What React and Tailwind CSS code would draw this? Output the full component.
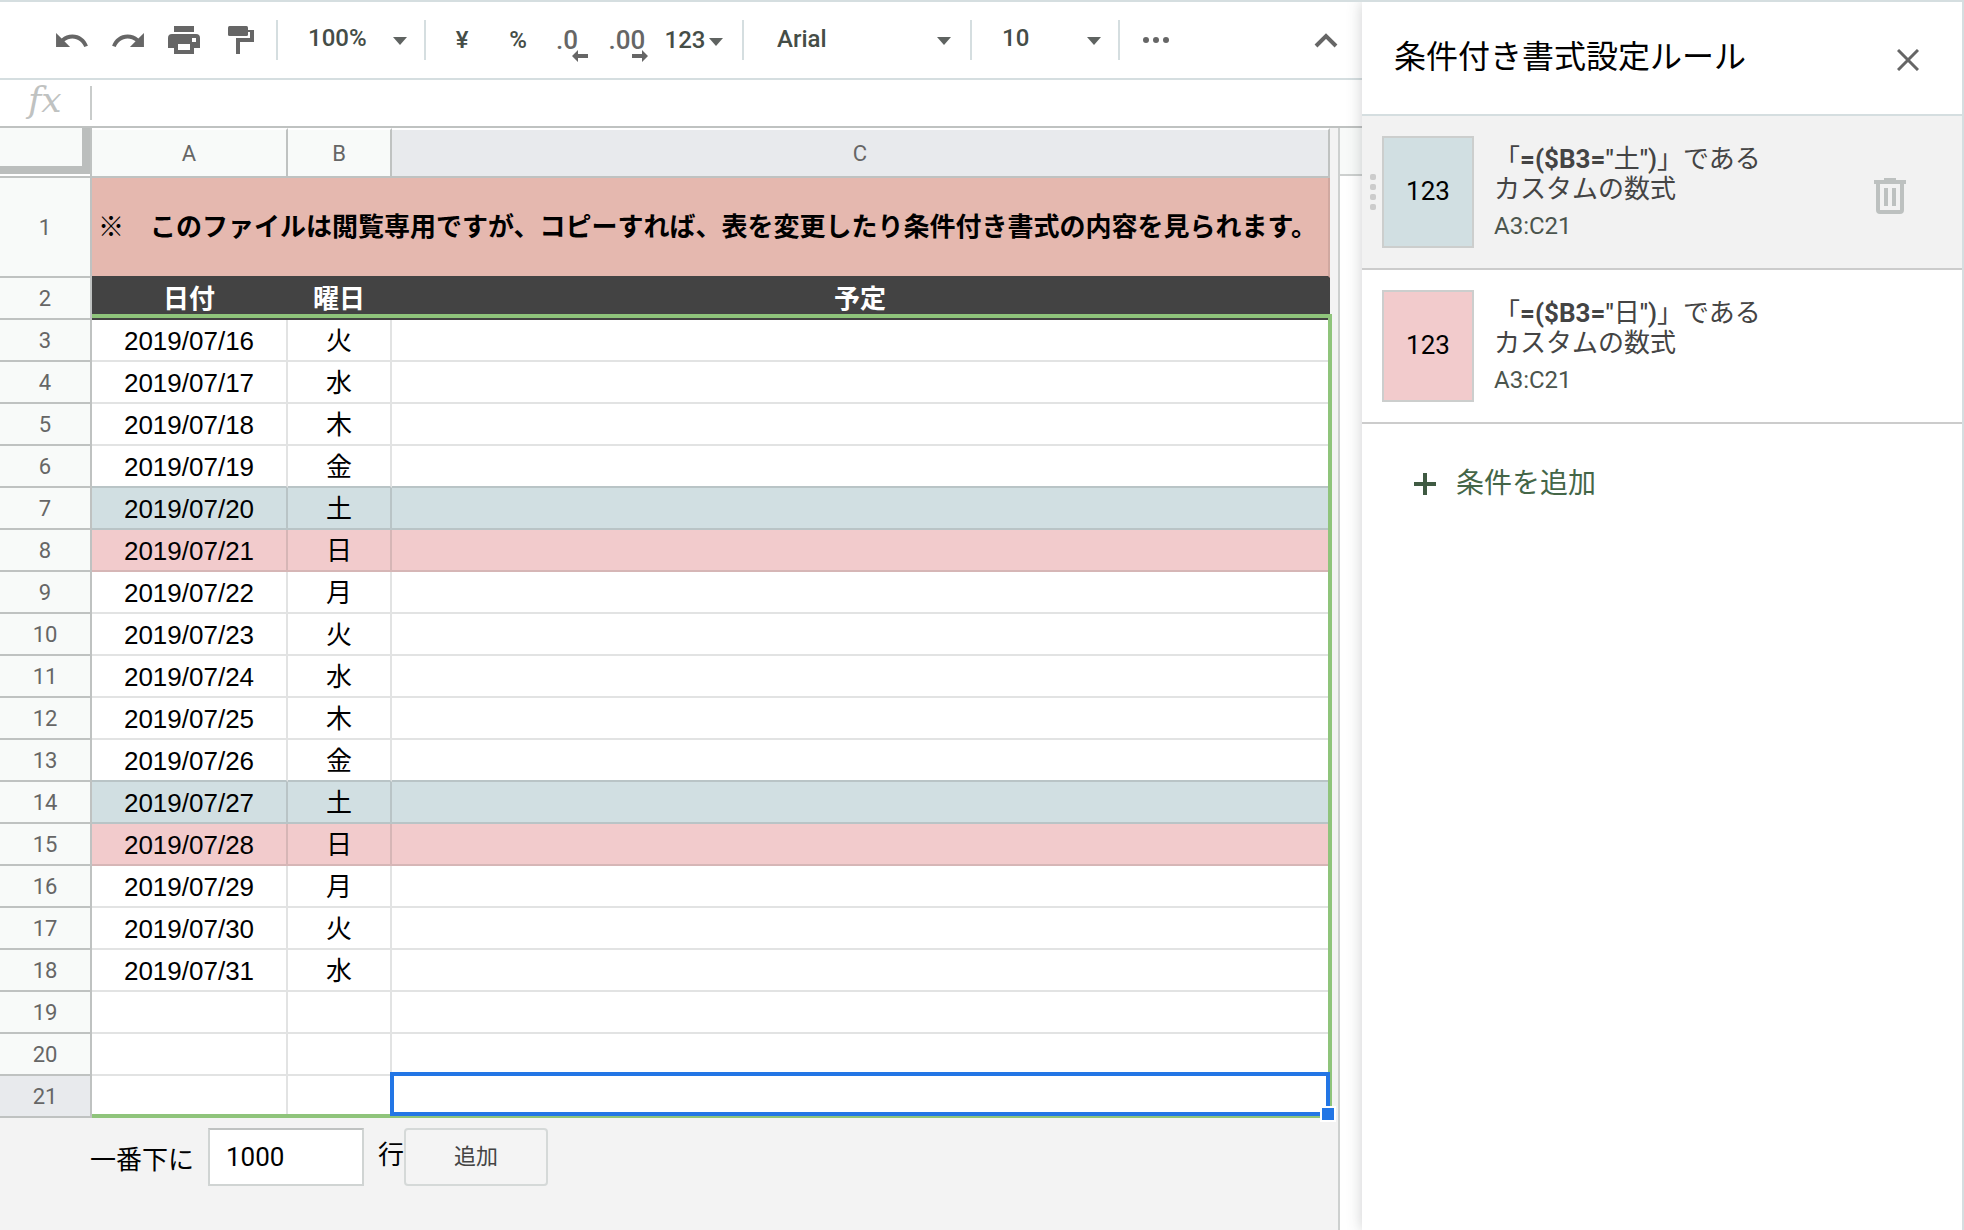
import React from "react";

const DAYS = ["火", "水", "木", "金", "土", "日", "月"];

const ROWS = Array.from({ length: 19 }, (_, i) => {
  const filled = i < 16;
  return {
    number: i + 3,
    date: filled ? `2019/07/${16 + i}` : "",
    day: filled ? DAYS[i % 7] : "",
  };
});

const TINTS = {
  土: "bg-[#d1dfe2] border-[#b9c4c6]",
  日: "bg-[#f2cbcc] border-[#d6b6b6]",
};

const RULES = [
  { day: "土", swatch: "bg-[#d1dfe2]", active: true },
  { day: "日", swatch: "bg-[#f2cbcc]", active: false },
];

function Caret() {
  return (
    <svg width="14" height="8" viewBox="0 0 14 8" fill="#5f6361" aria-hidden="true">
      <path d="M0 0h14L7 8z" />
    </svg>
  );
}

function Separator() {
  return <span className="h-10 w-0.5 shrink-0 bg-[#d5dee0]" />;
}

function ToolButton({ label, className = "", children }) {
  return (
    <button
      type="button"
      aria-label={label}
      className={`relative flex h-12 w-14 shrink-0 items-center justify-center text-2xl leading-8 font-medium text-[#454d47] ${className}`}
    >
      {children}
    </button>
  );
}

function ToolSelect({ label, value, className, inset = "pb-1 pl-[30px]" }) {
  return (
    <div className={`relative flex h-12 shrink-0 items-center ${className}`}>
      <select
        aria-label={label}
        defaultValue={value}
        className={`h-12 w-full appearance-none bg-transparent text-2xl font-medium text-[#454d47] ${inset}`}
      >
        <option>{value}</option>
      </select>
      <span className="pointer-events-none absolute inset-y-0 right-[17px] flex items-center pt-0.5">
        <Caret />
      </span>
    </div>
  );
}

function Toolbar() {
  return (
    <div className="flex h-[78px] items-center border-b-2 border-[#d5dee0] pr-2 pl-11">
      <ToolButton label="元に戻す">
        <svg width="32" height="14" viewBox="2 7 20.5 9" fill="#666666" aria-hidden="true">
          <path d="M12.5 8c-2.65 0-5.05.99-6.9 2.6L2 7v9h9l-3.62-3.62c1.39-1.16 3.16-1.88 5.12-1.88 3.54 0 6.55 2.31 7.6 5.5l2.37-.78C21.08 11.03 17.15 8 12.5 8z" />
        </svg>
      </ToolButton>
      <ToolButton label="やり直す">
        <svg width="32" height="14" viewBox="1.5 7 20.5 9" fill="#666666" aria-hidden="true">
          <path d="M18.4 10.6C16.55 8.99 14.15 8 11.5 8c-4.65 0-8.58 3.03-9.96 7.22L3.9 16c1.05-3.19 4.05-5.5 7.6-5.5 1.95 0 3.73.72 5.12 1.88L13 16h9V7l-3.6 3.6z" />
        </svg>
      </ToolButton>
      <ToolButton label="印刷">
        <svg width="32" height="28" viewBox="0 0 32 28" fill="#666666" aria-hidden="true">
          <path d="M6 0h20v6H6z" />
          <path
            fillRule="evenodd"
            d="M4 8h24a4 4 0 0 1 4 4v10h-6v6H6v-6H0V12a4 4 0 0 1 4-4zm6 10v6h12v-6zm14-6v4h4v-4z"
          />
        </svg>
      </ToolButton>
      <ToolButton label="書式を貼り付け" className="pl-0.5">
        <svg width="26" height="28" viewBox="0 0 26 28" fill="#666666" aria-hidden="true">
          <rect width="20" height="10" rx="1.5" />
          <path d="M20 4h6v12H12v12H8V12h14V6h-2z" />
        </svg>
      </ToolButton>
      <span className="w-2" />
      <Separator />
      <ToolSelect label="ズーム" value="100%" className="w-[146px]" />
      <Separator />
      <span className="w-2" />
      <ToolButton label="通貨の表示形式">¥</ToolButton>
      <ToolButton label="パーセント表示">%</ToolButton>
      <ToolButton label="小数点以下の桁数を減らす">
        <span className="pr-3.5 text-[26px] text-[#666666]">.0</span>
        <svg className="absolute right-3.5 bottom-0.5" width="16" height="12" viewBox="0 0 16 12" fill="#666666" aria-hidden="true">
          <path d="M6 0v4h10v4H6v4L0 6z" />
        </svg>
      </ToolButton>
      <ToolButton label="小数点以下の桁数を増やす">
        <span className="pr-1.5 text-[26px] text-[#666666]">.00</span>
        <svg className="absolute right-2.5 bottom-0.5" width="16" height="12" viewBox="0 0 16 12" fill="#666666" aria-hidden="true">
          <path d="M10 0v4H0v4h10v4l6-6z" />
        </svg>
      </ToolButton>
      <button
        type="button"
        className="flex h-12 w-[72px] shrink-0 items-center justify-center gap-1 text-2xl font-medium text-[#454d47]"
      >
        123
        <span className="pt-1">
          <Caret />
        </span>
      </button>
      <span className="w-3" />
      <Separator />
      <ToolSelect label="フォント" value="Arial" className="w-[224px]" inset="pb-0.5 pl-[33px]" />
      <span className="w-0.5" />
      <Separator />
      <ToolSelect label="フォントサイズ" value="10" className="w-[146px]" />
      <Separator />
      <span className="w-2" />
      <ToolButton label="その他">
        <svg width="26" height="6" viewBox="0 0 26 6" fill="#666666" aria-hidden="true">
          <circle cx="3" cy="3" r="3" />
          <circle cx="13" cy="3" r="3" />
          <circle cx="23" cy="3" r="3" />
        </svg>
      </ToolButton>
      <ToolButton label="メニューを非表示" className="ml-auto">
        <svg width="24" height="16" viewBox="0 0 24 16" fill="none" stroke="#666666" strokeWidth="4" aria-hidden="true">
          <path d="M2 14 12 4l10 10" />
        </svg>
      </ToolButton>
    </div>
  );
}

function FormulaBar() {
  return (
    <div className="flex h-12 items-center border-b-2 border-[#bfc2c1]">
      <label
        htmlFor="formula"
        className="w-[90px] pb-1.5 pl-7 font-['DejaVu_Serif','Liberation_Serif',serif] text-[36px] leading-10 text-[#bfc2c1] italic"
      >
        fx
      </label>
      <span className="h-[34px] w-0.5 bg-[#c9cccb]" />
      <input id="formula" className="h-full min-w-0 flex-1 px-3 text-2xl outline-none" />
    </div>
  );
}

function Sheet() {
  const head = "border-r-2 border-b-2 border-[#bfc2c1] p-0 pt-0.5 text-[22px] leading-7 font-normal text-[#666666]";
  return (
    <div className="relative">
      <table className="w-full table-fixed border-separate border-spacing-0 bg-white text-center font-['Liberation_Sans','Noto_Sans_CJK_JP',sans-serif] text-[26px] leading-8 text-black">
        <colgroup>
          <col className="w-[92px]" />
          <col className="w-[196px]" />
          <col className="w-[104px]" />
          <col />
        </colgroup>
        <thead className="font-['Roboto','Noto_Sans_CJK_JP',sans-serif]">
          <tr className="h-[50px]">
            <td className="border-r-2 border-b-2 border-[#bfc2c1] p-0 align-top">
              <div className="h-[46px] border-r-8 border-b-8 border-[#bbbebd] bg-[#f8faf9]" />
            </td>
            <th scope="col" className={`${head} border-t-2 border-t-white bg-[#f8faf9]`}>A</th>
            <th scope="col" className={`${head} border-t-2 border-t-white bg-[#f8faf9]`}>B</th>
            <th scope="col" className={`${head} border-t-2 border-t-white bg-[#e8eaed]`}>C</th>
          </tr>
        </thead>
        <tbody>
          <tr className="h-[100px]">
            <th scope="row" className={`${head} bg-[#f8faf9] font-['Roboto',sans-serif]`}>1</th>
            <td
              colSpan={3}
              className="border-r-2 border-b-2 border-r-[#d0a8a0] border-b-[#434343] bg-[#e5b8af] py-0 pr-0 pl-1.5 text-left font-bold whitespace-nowrap"
            >
              ※　このファイルは閲覧専用ですが、コピーすれば、表を変更したり条件付き書式の内容を見られます。
            </td>
          </tr>
          <tr className="h-[42px]">
            <th scope="row" className={`${head} bg-[#f8faf9] font-['Roboto',sans-serif]`}>2</th>
            {["日付", "曜日", "予定"].map((title) => (
              <td key={title} className="border-r-2 border-b-2 border-[#434343] bg-[#434343] p-0 pt-0.5 font-bold text-white">
                {title}
              </td>
            ))}
          </tr>
          {ROWS.map(({ number, date, day }) => {
            const selected = number === 21;
            const cell = `border-r-2 border-b-2 p-0 pt-0.5 ${TINTS[day] || (day === "金" ? "border-[#e2e3e3] border-b-[#b9c4c6]" : "border-[#e2e3e3]")}`;
            return (
              <tr key={number} className="h-[42px]">
                <th scope="row" className={`${head} font-['Roboto',sans-serif] ${selected ? "bg-[#e8eaed]" : "bg-[#f8faf9]"}`}>
                  {number}
                </th>
                <td className={cell}>{date}</td>
                <td className={cell}>{day}</td>
                <td className={`${cell} relative`}>
                  {selected && (
                    <div className="absolute -top-1 -right-0.5 bottom-0 -left-0.5 z-10 border-4 border-[#2376e5]">
                      <span className="absolute -right-2.5 -bottom-2.5 size-4 border-2 border-white bg-[#2376e5]" />
                    </div>
                  )}
                </td>
              </tr>
            );
          })}
        </tbody>
      </table>
      <div className="pointer-events-none absolute top-[186px] -right-0.5 bottom-0 left-[92px] border-t-4 border-r-4 border-b-4 border-[#8fc47b]" />
    </div>
  );
}

function AddRows() {
  return (
    <form className="flex items-center pt-2.5 pl-[90px] text-[26px] leading-8 text-black" onSubmit={(e) => e.preventDefault()}>
      <label htmlFor="row-count" className="w-[118px] pt-1.5">一番下に</label>
      <input
        id="row-count"
        defaultValue="1000"
        className="h-[58px] w-[156px] border-2 border-[#d0d4d3] border-t-[#bfc2c1] bg-white px-4 outline-none"
      />
      <span className="pb-1 pl-3.5">行</span>
      <button
        type="submit"
        className="h-[58px] w-36 rounded-sm border-2 border-[#d5d9d8] bg-[#f4f4f4] text-[22px] text-[#444444]"
      >
        追加
      </button>
    </form>
  );
}

function Rule({ day, swatch, active }) {
  return (
    <li className={`flex h-[154px] items-start border-b-2 border-[#cccccc] pt-5 ${active ? "bg-[#f2f2f2]" : "bg-white"}`}>
      <span className="flex h-28 w-5 shrink-0 flex-col items-center justify-center gap-1 pl-0.5">
        {active &&
          [0, 1, 2, 3].map((dot) => <span key={dot} className="size-1.5 rounded-xs bg-[#cccccc]" />)}
      </span>
      <span
        className={`flex h-28 w-[92px] shrink-0 items-center justify-center border-2 border-[#cccecd] pb-0.5 text-[26px] text-black ${swatch}`}
      >
        123
      </span>
      <div className="flex-1 pl-5 text-[#444444]">
        <p className="pt-2 text-[26px] leading-[30px]">
          「<span className="font-bold">=($B3=</span>
          <span className="font-medium">"</span>
          {day}
          <span className="font-medium">")</span>」である
          <br />
          カスタムの数式
        </p>
        <p className="pt-1.5 text-2xl leading-8 text-[#4b554d]">A3:C21</p>
      </div>
      {active && (
        <button type="button" aria-label="ルールを削除" className="mt-10 mr-14 flex h-10 w-8 items-center justify-center">
          <svg width="32" height="36" viewBox="0 0 32 36" fill="#bdc1c0" aria-hidden="true">
            <path d="M10 0h12v2h10v4H0V2h10z" />
            <path fillRule="evenodd" d="M2 6h28v26a4 4 0 0 1-4 4H6a4 4 0 0 1-4-4zm4 0v26h20V6z" />
            <path d="M10 10h4v18h-4zM18 10h4v18h-4z" />
          </svg>
        </button>
      )}
    </li>
  );
}

function RulesPanel() {
  return (
    <aside className="relative w-[602px] shrink-0 border-r-2 border-[#d5dee0] bg-white shadow-[0_0_14px_rgba(60,64,67,0.25)]">
      <header className="flex h-[114px] items-center justify-between border-b-2 border-[#d5dee0] pr-[43px] pb-0.5 pl-8">
        <h2 className="text-[32px] leading-10 text-black">条件付き書式設定ルール</h2>
        <button type="button" aria-label="閉じる" className="mt-1.5 p-0">
          <svg width="22" height="22" viewBox="0 0 22 22" fill="none" stroke="#666666" strokeWidth="3" aria-hidden="true">
            <path d="m1 1 20 20M21 1 1 21" />
          </svg>
        </button>
      </header>
      <ul>
        {RULES.map((rule) => (
          <Rule key={rule.day} {...rule} />
        ))}
      </ul>
      <button type="button" className="mt-10 ml-[52px] flex items-center gap-5 text-[28px] leading-10 text-[#446647]">
        <svg width="22" height="22" viewBox="0 0 22 22" fill="#3f5a42" aria-hidden="true">
          <path d="M9 0h4v9h9v4h-9v9H9v-9H0V9h9z" />
        </svg>
        条件を追加
      </button>
    </aside>
  );
}

export default function App() {
  return (
    <div className="flex min-h-screen overflow-hidden border-t-2 border-[#d5dee0] bg-white font-['Roboto','Noto_Sans_CJK_JP',sans-serif]">
      <main className="flex min-w-0 flex-1 flex-col">
        <Toolbar />
        <FormulaBar />
        <div className="flex flex-1">
          <div className="min-w-0 flex-1 border-r-2 border-[#cdd0cf] bg-[#f3f3f3] pr-2">
            <Sheet />
            <AddRows />
          </div>
          <div className="w-[22px] shrink-0">
            <div className="h-12 border-b-2 border-[#cdd0cf] bg-[#f8faf9]" />
          </div>
        </div>
      </main>
      <RulesPanel />
    </div>
  );
}
